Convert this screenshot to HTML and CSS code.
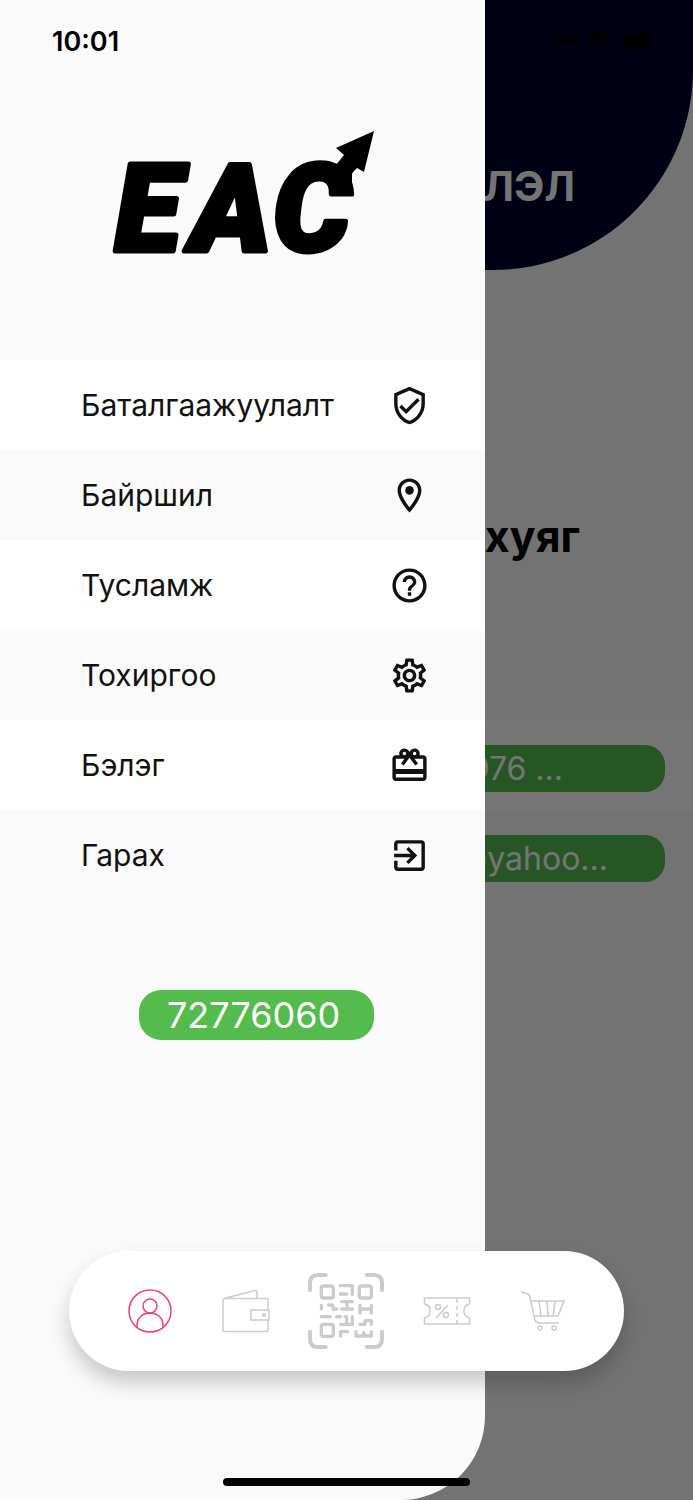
FILE: index.html
```html
<!DOCTYPE html>
<html lang="mn">
<head>
<meta charset="utf-8">
<meta name="viewport" content="width=device-width, initial-scale=1">
<title>EAC</title>
<link rel="stylesheet" href="styles.css">
</head>
<body>
<div class="app">
  <main class="profile">
    <header class="profile-header"><h1 class="profile-title">ЛЭЛ</h1></header>
    <h2 class="profile-name">хуяг</h2>
    <div class="profile-rows">
      <div class="profile-row profile-row-light"><p class="chip chip-phone">976 ...</p></div>
      <div class="profile-row"><p class="chip chip-mail">@yahoo...</p></div>
    </div>
  </main>
  <div class="scrim"></div>

  <aside class="drawer">
    <svg class="logo" viewBox="0 0 264 142" role="img" aria-label="EAC">
      <text class="logo-text" x="3 79 161" y="121">EAC</text>
      <path d="M262 1 224 18 232 25 224 35 232 54 242 41 245 38 252 42Z"/>
      <path d="M222 35 232 34 240 42 240 60H228Z"/>
    </svg>
    <nav class="menu" aria-label="Цэс">
      <a class="menu-item" href="#verify"><span>Баталгаажуулалт</span>
        <svg class="menu-icon" viewBox="0 0 24 24"><path d="M12 1 3 5v6c0 5.550 3.840 10.740 9 12 5.160-1.260 9-6.450 9-12V5l-9-4zm7 10c0 4.520-2.980 8.690-7 9.930-4.020-1.240-7-5.410-7-9.930V6.300l7-3.110 7 3.110V11zm-11.590.59L6 13l4 4 8-8-1.410-1.420L10 14.170z"/></svg></a>
      <a class="menu-item" href="#location"><span>Байршил</span>
        <svg class="menu-icon" viewBox="0 0 24 24"><path d="M12 2C8.130 2 5 5.130 5 9c0 5.250 7 13 7 13s7-7.750 7-13c0-3.870-3.130-7-7-7zM7 9c0-2.760 2.240-5 5-5s5 2.240 5 5c0 2.880-2.880 7.190-5 9.880C9.920 16.210 7 11.850 7 9z"/><circle cx="12" cy="9" r="2.500"/></svg></a>
      <a class="menu-item" href="#help"><span>Тусламж</span>
        <svg class="menu-icon" viewBox="0 0 24 24"><path d="M11 18h2v-2h-2v2zm1-16C6.480 2 2 6.480 2 12s4.480 10 10 10 10-4.480 10-10S17.520 2 12 2zm0 18c-4.410 0-8-3.590-8-8s3.590-8 8-8 8 3.590 8 8-3.590 8-8 8zm0-14c-2.210 0-4 1.790-4 4h2c0-1.100.9-2 2-2s2 .9 2 2c0 2-3 1.750-3 5h2c0-2.250 3-2.500 3-5 0-2.210-1.790-4-4-4z"/></svg></a>
      <a class="menu-item" href="#settings"><span>Тохиргоо</span>
        <svg class="menu-icon" viewBox="0 0 24 24"><path d="M19.430 12.980c.04-.32.07-.64.07-.98s-.03-.66-.07-.98l2.110-1.650c.19-.15.24-.42.12-.64l-2-3.460c-.09-.16-.26-.25-.44-.25-.06 0-.12.01-.17.03l-2.490 1c-.52-.4-1.080-.73-1.690-.98l-.38-2.650C14.460 2.180 14.250 2 14 2h-4c-.25 0-.46.18-.49.42l-.38 2.650c-.61.25-1.170.59-1.690.98l-2.490-1c-.06-.02-.12-.03-.18-.03-.17 0-.34.09-.43.25l-2 3.460c-.13.22-.07.49.12.64l2.110 1.650c-.04.32-.07.65-.07.98s.03.66.07.98l-2.110 1.650c-.19.15-.24.42-.12.64l2 3.460c.09.16.26.25.44.25.06 0 .12-.01.17-.03l2.490-1c.52.4 1.080.73 1.690.98l.38 2.650c.03.24.24.42.49.42h4c.25 0 .46-.18.49-.42l.38-2.650c.61-.25 1.170-.59 1.690-.98l2.490 1c.06.02.12.03.18.03.17 0 .34-.09.43-.25l2-3.460c.12-.22.07-.49-.12-.64l-2.110-1.650zm-1.980-1.710c.04.31.05.52.05.73 0 .21-.02.43-.05.73l-.14 1.130.89.7 1.080.84-.7 1.210-1.270-.51-1.040-.42-.9.68c-.43.32-.84.56-1.250.73l-1.060.43-.16 1.130-.2 1.350h-1.400l-.19-1.350-.16-1.130-1.060-.43c-.43-.18-.83-.41-1.230-.71l-.91-.7-1.060.43-1.270.51-.7-1.210 1.080-.84.89-.7-.14-1.130c-.03-.31-.05-.54-.05-.74s.02-.43.05-.73l.14-1.130-.89-.7-1.080-.84.7-1.210 1.270.51 1.040.42.9-.68c.43-.32.84-.56 1.250-.73l1.060-.43.16-1.130.2-1.350h1.390l.19 1.350.16 1.130 1.060.43c.43.18.83.41 1.230.71l.91.7 1.060-.43 1.270-.51.7 1.210-1.070.85-.89.7.14 1.130zM12 8c-2.210 0-4 1.790-4 4s1.790 4 4 4 4-1.790 4-4-1.790-4-4-4zm0 6c-1.100 0-2-.9-2-2s.9-2 2-2 2 .9 2 2-.9 2-2 2z"/></svg></a>
      <a class="menu-item" href="#gift"><span>Бэлэг</span>
        <svg class="menu-icon" viewBox="0 0 24 24"><path d="M20 6h-2.180c.11-.31.18-.65.18-1 0-1.660-1.340-3-3-3-1.050 0-1.960.54-2.500 1.350l-.5.670-.5-.68C10.960 2.540 10.050 2 9 2 7.340 2 6 3.340 6 5c0 .35.07.69.18 1H4c-1.110 0-1.990.89-1.990 2L2 19c0 1.110.89 2 2 2h16c1.110 0 2-.89 2-2V8c0-1.110-.89-2-2-2zm-5-2c.55 0 1 .45 1 1s-.45 1-1 1-1-.45-1-1 .45-1 1-1zM9 4c.55 0 1 .45 1 1s-.45 1-1 1-1-.45-1-1 .45-1 1-1zm11 15H4v-2h16v2zm0-5H4V8h5.080L7 10.830 8.620 12 11 8.760l1-1.360 1 1.360L15.380 12 17 10.830 14.920 8H20v6z"/></svg></a>
      <a class="menu-item" href="#logout"><span>Гарах</span>
        <svg class="menu-icon" viewBox="0 0 24 24"><path d="M10.090 15.590 11.500 17l5-5-5-5-1.410 1.410L12.670 11H3v2h9.670l-2.580 2.590zM19 3H5c-1.110 0-2 .9-2 2v4h2V5h14v14H5v-4H3v4c0 1.100.89 2 2 2h14c1.100 0 2-.9 2-2V5c0-1.100-.9-2-2-2z"/></svg></a>
    </nav>
    <a class="call" href="tel:72776060">72776060</a>
  </aside>

  <div class="status">
    <time class="clock">10:01</time>
    <svg class="status-icons" viewBox="0 0 117 24">
      <path class="signal" d="M3 9v3M11 8v4M18.500 5v7M26 3v9M3 20v0M11 20v0M18.500 20v0"/>
      <path class="wifi" d="M39 8Q51-1 63 8M43 14Q51 7 59 14"/>
      <path d="M47 17Q51 14 55 17L51 21Z"/>
      <rect class="battery-case" x="74" y="2" width="37" height="19" rx="5"/>
      <rect x="76" y="4" width="26" height="15" rx="2"/>
      <path class="battery-tip" d="M114 8q4 3 0 6z"/>
    </svg>
  </div>

  <nav class="tabs" aria-label="Үндсэн цэс">
    <a class="tab tab-active" href="#profile" aria-label="Профайл">
      <svg class="tab-icon" viewBox="0 0 44 44"><circle cx="22" cy="22" r="21"/><circle cx="22" cy="17" r="7"/><path d="M9 38V36C9 20 35 20 35 36V38"/></svg></a>
    <a class="tab" href="#wallet" aria-label="Түрийвч">
      <svg class="tab-icon tab-icon-wallet" viewBox="0 0 48 44"><rect x="1" y="9.500" width="45" height="33" rx="2"/><path d="M2 9.500 33 1.500Q35 1 35 3.500V9"/><path class="cover" d="M29 21H47V31H29Z"/><circle class="dot" cx="42" cy="26" r="2"/></svg></a>
    <a class="tab" href="#qr" aria-label="QR">
      <svg class="tab-icon-qr" viewBox="26 24 228 228">
        <path d="M32 76V54Q32 30 56 30H79M202 30H224Q248 30 248 54V76M32 200V222Q32 246 56 246H79M202 246H224Q248 246 248 222V200"/>
        <g class="modules">
          <rect x="66" y="63" width="36" height="36" rx="7"/><rect x="180" y="63" width="36" height="36" rx="7"/><rect x="66" y="178" width="36" height="36" rx="7"/>
          <path d="M123 62H159V88M123 87H142M66 121V132M88 120H99L102 132H113M127 110H159M143 110V132M127 132H159M66 155H93M112 155H123M137 155H142V178M124 178H159V155M182 121V144M216 121V144M182 132H216M182 178H197V167H216M216 167V178M124 213V200H145M170 200V213H216V200M193 202V213"/>
        </g>
      </svg></a>
    <a class="tab" href="#coupons" aria-label="Купон">
      <svg class="tab-icon tab-icon-ticket" viewBox="0 0 48 30"><path d="M1.500 2H46.500V8C39 10 39 20 46.500 22V28H1.500V22C9 20 9 10 1.500 8Z"/><path d="M13 22 25 9"/><circle cx="15" cy="11" r="2.500"/><circle cx="23" cy="19" r="2.500"/><path class="dash" d="M34 3V28"/></svg></a>
    <a class="tab" href="#cart" aria-label="Сагс">
      <svg class="tab-icon" viewBox="0 0 44 44"><path d="M0 3 7 5Q9 6 9 9L14 31Q15 34 18 34H38M10 12H43L37 27H13M18 12 20 27M26 12 27 27M34 12 32 27"/><circle cx="19" cy="39" r="2"/><circle cx="33" cy="39" r="2"/></svg></a>
  </nav>
  <div class="home-bar"></div>
</div>
</body>
</html>
```

FILE: styles.css
```css
* { box-sizing: border-box; }

body {
  margin: 0;
  background: #fafafa;
  color: #111;
  font-family: Inter, "Noto Sans", sans-serif;
}

h1, h2, p { margin: 0; }

a { color: inherit; text-decoration: none; }

/* Every direct child is a layer that shares the one grid cell. */
.app {
  display: grid;
  grid-template-columns: minmax(0, 1fr);
  min-height: 100vh;
  overflow: hidden;
}

.app > * { grid-area: 1 / 1; }

.profile-header {
  height: 270px;
  padding: 160px 118px 0 70%;
  background: #00002c;
  border-bottom-right-radius: 200px;
}

.profile-title {
  display: flex;
  justify-content: flex-end;
  color: #fff;
  font-size: 41px;
  font-weight: 700;
  line-height: 52px;
}

.profile-name {
  display: flex;
  justify-content: flex-end;
  padding: 238px 113px 0 70%;
  color: #000;
  font-size: 43px;
  font-weight: 700;
  line-height: 56px;
}

.profile-rows { padding-top: 158px; }

.profile-row {
  display: flex;
  align-items: center;
  height: 90px;
  padding: 2px 28px 0 50%;
}

.profile-row-light { background: #fff; }

.chip {
  display: flex;
  justify-content: flex-end;
  width: 100%;
  border-radius: 20px;
  background: #54bb4d;
  color: #fff;
  font-size: 32px;
  line-height: 47px;
}

.chip-phone { padding-right: 102px; }
.chip-mail { padding-right: 57px; }

.scrim { background: rgba(0, 0, 0, 0.54); }

.drawer {
  display: flex;
  flex-direction: column;
  align-items: flex-start;
  width: 70%;
  padding-top: 130px;
  border-bottom-right-radius: 84px;
  background: #fafafa;
}

.logo {
  width: 264px;
  height: 142px;
  margin-left: 112px;
  overflow: visible;
  fill: #000;
}

.logo-text {
  stroke: #000;
  stroke-width: 5;
  stroke-linejoin: round;
  font-family: Roboto, sans-serif;
  font-size: 122px;
  font-style: italic;
  font-weight: 900;
}

.menu {
  width: 100%;
  margin-top: 88px;
}

.menu-item {
  display: flex;
  align-items: center;
  justify-content: space-between;
  height: 90px;
  padding: 0 55px 0 81px;
  font-size: 30px;
  line-height: 40px;
}

.menu-item:nth-child(odd) { background: #fff; }

.menu-icon {
  width: 41px;
  height: 41px;
  fill: #111;
}

.call {
  width: 235px;
  margin: 90px 0 0 139px;
  padding-left: 28px;
  border-radius: 22px;
  background: #54bb4d;
  color: #fff;
  font-size: 36px;
  line-height: 50px;
}

.status {
  display: flex;
  align-items: flex-start;
  justify-content: space-between;
  align-self: start;
  padding: 26px 28px 0 52px;
  color: #000;
}

.clock {
  font-size: 27px;
  font-weight: 600;
  line-height: 32px;
}

.status-icons {
  width: 117px;
  height: 24px;
  margin-top: 4px;
}

.signal, .wifi {
  fill: none;
  stroke: #000;
  stroke-width: 5;
  stroke-linecap: round;
}

.wifi { stroke-width: 4; stroke-linecap: butt; }

.battery-case {
  fill: none;
  stroke: #000;
  opacity: 0.4;
}

.battery-tip { opacity: 0.4; }

.tabs {
  display: grid;
  grid-template-columns: 94fr 98fr 102fr 98fr 94fr;
  align-self: end;
  justify-self: center;
  width: 80%;
  height: 120px;
  margin-bottom: 129px;
  padding: 0 34px;
  border-radius: 60px;
  background: #fff;
  box-shadow: 0 12px 20px rgba(0, 0, 0, 0.2);
}

.tab {
  display: flex;
  align-items: center;
  justify-content: center;
  color: #cbcbcb;
}

.tab-active { color: #ec407a; }

.tab-icon {
  width: 44px;
  height: 44px;
  fill: none;
  stroke: currentColor;
  stroke-width: 1.5;
}

.tab-icon-wallet { width: 48px; }

.tab-icon-ticket { width: 48px; height: 30px; }

.tab-icon-qr {
  width: 76px;
  height: 76px;
  fill: none;
  stroke: currentColor;
  stroke-width: 12;
  stroke-linecap: round;
  stroke-linejoin: round;
}

.modules { stroke-width: 10; }

.cover { fill: #fff; }

.dot { fill: currentColor; stroke: none; }

.dash { stroke-dasharray: 4 3; }

.home-bar {
  align-self: end;
  justify-self: center;
  width: 247px;
  height: 8px;
  margin-bottom: 14px;
  border-radius: 4px;
  background: #000;
}
```
